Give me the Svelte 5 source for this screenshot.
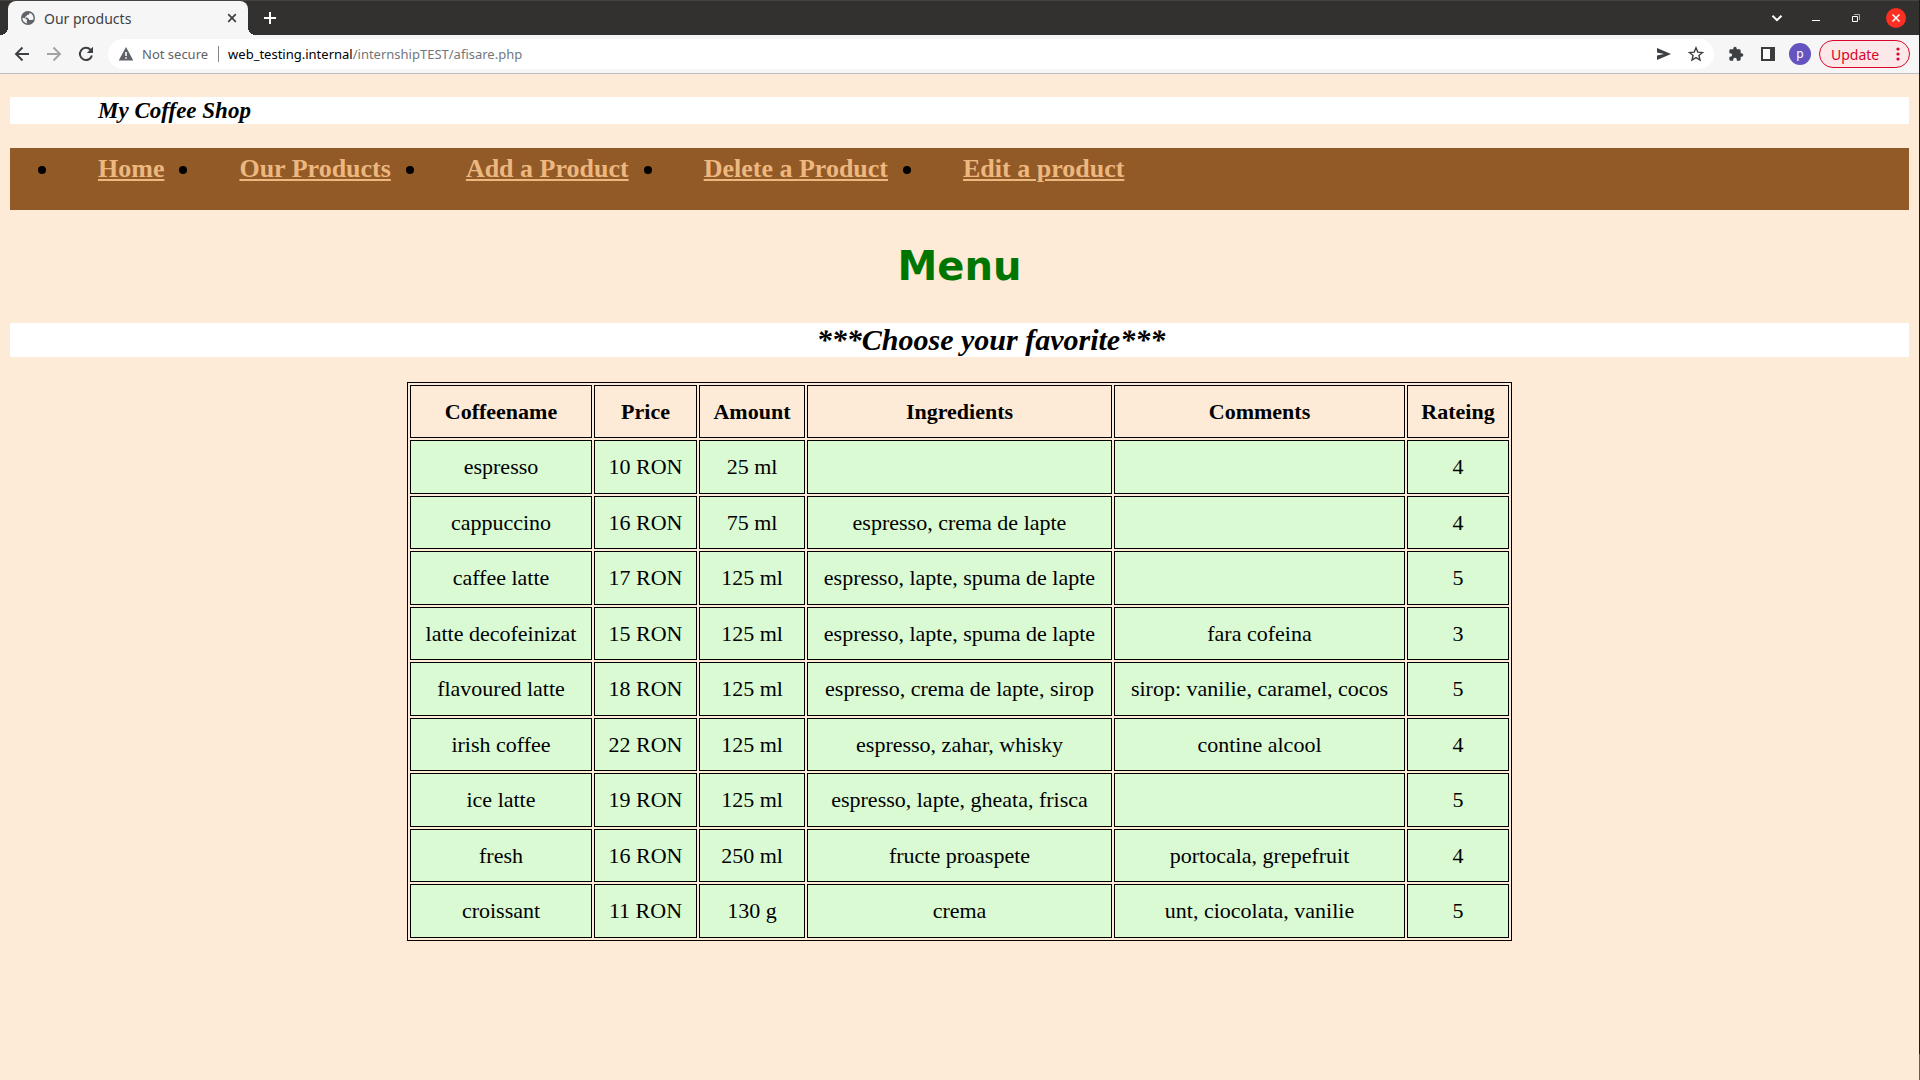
<script>
  const links = ['Home', 'Our Products', 'Add a Product', 'Delete a Product', 'Edit a product'];
  const columns = [
    { title: 'Coffeename', cls: 'name' },
    { title: 'Price', cls: 'price' },
    { title: 'Amount', cls: 'amount' },
    { title: 'Ingredients', cls: 'ingredients' },
    { title: 'Comments', cls: 'comments' },
    { title: 'Rateing', cls: 'rating' }
  ];
  const products = [
    ['espresso', '10 RON', '25 ml', '', '', '4'],
    ['cappuccino', '16 RON', '75 ml', 'espresso, crema de lapte', '', '4'],
    ['caffee latte', '17 RON', '125 ml', 'espresso, lapte, spuma de lapte', '', '5'],
    ['latte decofeinizat', '15 RON', '125 ml', 'espresso, lapte, spuma de lapte', 'fara cofeina', '3'],
    ['flavoured latte', '18 RON', '125 ml', 'espresso, crema de lapte, sirop', 'sirop: vanilie, caramel, cocos', '5'],
    ['irish coffee', '22 RON', '125 ml', 'espresso, zahar, whisky', 'contine alcool', '4'],
    ['ice latte', '19 RON', '125 ml', 'espresso, lapte, gheata, frisca', '', '5'],
    ['fresh', '16 RON', '250 ml', 'fructe proaspete', 'portocala, grepefruit', '4'],
    ['croissant', '11 RON', '130 g', 'crema', 'unt, ciocolata, vanilie', '5']
  ];
</script>

<div class="window">
  <header class="browser">
    <div class="tabstrip">
      <div class="tab">
        <svg class="globe" viewBox="0 0 16 16" width="16" height="16" aria-hidden="true">
          <circle cx="8" cy="8" r="7" fill="#5f6368" />
          <path d="M9.500 2.700C9.800 4 9 4.700 7.800 4.800c-1 .1-.8 1.500-1.800 1.600-.8.1-1.200.5-.9 1.100.5.800 2.600.2 3.400 1 .6.600.3 1.500 1.300 1.600 1.200.1 2.200-.6 3.500-.4A5.600 5.600 0 0 0 9.500 2.700z" fill="#f6f6f6" />
          <path d="M2.400 7.700c1.600.2 3.400.6 4.300 1.700.8 1-.2 1.600 0 2.500.1.700.7 1 .6 1.700A5.600 5.600 0 0 1 2.400 7.700z" fill="#f6f6f6" />
        </svg>
        <span class="tab-title">Our products</span>
        <button class="plain close-tab" aria-label="Close tab">
          <svg viewBox="0 0 16 16" width="16" height="16"><path d="M4.200 4.200l7.600 7.600M11.800 4.200l-7.600 7.600" stroke="#3c4043" stroke-width="1.700" /></svg>
        </button>
      </div>
      <button class="plain new-tab" aria-label="New tab">
        <svg viewBox="0 0 16 16" width="16" height="16"><path d="M8 2v12M2 8h12" stroke="#fff" stroke-width="2" /></svg>
      </button>
      <div class="controls">
        <button class="plain" aria-label="Search tabs">
          <svg viewBox="0 0 20 20" width="20" height="20"><path d="M6.500 7.700l4.500 4.500 4.500-4.500" fill="none" stroke="#fff" stroke-width="2" /></svg>
        </button>
        <button class="plain" aria-label="Minimize">
          <svg viewBox="0 0 20 20" width="20" height="20"><path d="M6 12.500h8" stroke="#fff" /></svg>
        </button>
        <button class="plain" aria-label="Restore">
          <svg viewBox="0 0 20 20" width="20" height="20" fill="none"><path d="M8 6.500h5.500V12" stroke="#aaa" /><path d="M6.500 8.500h5v5h-5z" stroke="#fff" /></svg>
        </button>
        <button class="plain" aria-label="Close window">
          <svg viewBox="0 0 20 20" width="20" height="20"><circle cx="10" cy="10" r="10" fill="#fc2f22" /><path d="M6.500 6.500l7 7M13.500 6.500l-7 7" stroke="#fff" stroke-width="1.600" /></svg>
        </button>
      </div>
    </div>

    <div class="toolbar">
      <div class="history">
        <button class="plain" aria-label="Back">
          <svg viewBox="0 0 16 16" width="16" height="16"><path d="M15 8H2.500M8.500 1.500 2 8l6.500 6.500" fill="none" stroke="#3c4043" stroke-width="1.900" /></svg>
        </button>
        <button class="plain" aria-label="Forward">
          <svg viewBox="0 0 16 16" width="16" height="16"><path d="M1 8h12.500M7.500 1.500 14 8l-6.500 6.500" fill="none" stroke="#a3a3a3" stroke-width="1.900" /></svg>
        </button>
        <button class="plain" aria-label="Reload">
          <svg viewBox="0 0 16 16" width="16" height="16"><path d="M13.900 9.500A6.100 6.100 0 1 1 12.500 3.800" fill="none" stroke="#3c4043" stroke-width="2" /><path d="M15 .8v6.200H8.800z" fill="#3c4043" /></svg>
        </button>
      </div>
      <div class="omnibox">
        <svg viewBox="0 0 16 16" width="16" height="16" aria-hidden="true"><path d="M8 1 .7 14.500h14.600z" fill="#5f6368" /><path d="M8 6v4M8 11.200v1.600" stroke="#fff" stroke-width="1.600" /></svg>
        <span class="security">Not secure</span>
        <span class="url"><span class="host">web_testing.internal</span>/internshipTEST/afisare.php</span>
        <button class="plain share" aria-label="Share this page">
          <svg viewBox="0 0 16 16" width="16" height="16"><path d="M1 2l14 6-14 6V9.500L8 8 1 6.500z" fill="#3c4043" /></svg>
        </button>
        <button class="plain" aria-label="Bookmark this page">
          <svg viewBox="0 0 16 16" width="16" height="16"><path d="M8 1.800l1.800 4.300 4.700.4-3.600 3 1.100 4.600-4-2.500-4 2.500 1.100-4.600-3.600-3 4.700-.4z" fill="none" stroke="#3c4043" stroke-width="1.400" /></svg>
        </button>
      </div>
      <div class="actions">
        <button class="plain" aria-label="Extensions">
          <svg viewBox="0 0 24 24" width="16" height="16"><path d="M20.500 11H19V7c0-1.100-.9-2-2-2h-4V3.500a2.500 2.500 0 0 0-5 0V5H4c-1.100 0-2 .9-2 2v3.800h1.500a2.700 2.700 0 0 1 0 5.400H2V20c0 1.100.9 2 2 2h3.800v-1.500a2.700 2.700 0 0 1 5.400 0V22H17c1.100 0 2-.9 2-2v-4h1.500a2.500 2.500 0 0 0 0-5z" fill="#3c4043" /></svg>
        </button>
        <button class="plain panel" aria-label="Side panel">
          <svg viewBox="0 0 14 14" width="14" height="14"><path d="M0 0h14v14H0zM2 2v10h7V2z" fill="#3c3c3c" fill-rule="evenodd" /><path d="M2 2h7v10H2z" fill="#fff" /></svg>
        </button>
        <button class="plain avatar" aria-label="Profile">p</button>
        <button class="update">Update
          <svg viewBox="0 0 4 16" width="4" height="16" fill="#d9042b"><circle cx="2" cy="3" r="1.600" /><circle cx="2" cy="8" r="1.600" /><circle cx="2" cy="13" r="1.600" /></svg>
        </button>
      </div>
    </div>
  </header>

  <main>
    <h3>My Coffee Shop</h3>
    <nav>
      <ul>
        {#each links as link}
          <li><a href="#top">{link}</a></li>
        {/each}
      </ul>
    </nav>
    <h1>Menu</h1>
    <h2>***Choose your favorite***</h2>
    <table>
      <colgroup>
        {#each columns as column}<col class={column.cls} />{/each}
      </colgroup>
      <thead>
        <tr>
          {#each columns as column}<th scope="col">{column.title}</th>{/each}
        </tr>
      </thead>
      <tbody>
        {#each products as product}
          <tr>
            {#each product as value}<td>{value}</td>{/each}
          </tr>
        {/each}
      </tbody>
    </table>
  </main>
</div>

<style>
  :global(body) {
    margin: 0;
    background: #fdebd7;
  }
  .window {
    box-sizing: border-box;
    min-height: 100vh;
    padding-right: 1px;
    background: linear-gradient(#1d1b19 0, #1d1b19 calc(100% - 26px), #1a6fbf calc(100% - 26px)) right / 1px 100% no-repeat;
    font-family: 'Liberation Serif', serif;
    color: #000;
  }
  .browser {
    font-family: 'Noto Sans', sans-serif;
    font-size: 13px;
    border-bottom: 1px solid #bfbcc4;
  }
  .plain {
    display: flex;
    align-items: center;
    justify-content: center;
    padding: 0;
    border: 0;
    background: none;
    font: inherit;
  }
  .tabstrip {
    display: flex;
    align-items: center;
    height: 34px;
    padding-left: 8px;
    border-top: 1px solid #454442;
    background: #32312f;
  }
  .tab {
    position: relative;
    box-sizing: border-box;
    display: flex;
    align-items: center;
    gap: 8px;
    width: 240px;
    height: 34px;
    padding: 0 8px 0 12px;
    border-radius: 8px 8px 0 0;
    background: #f6f6f6;
    color: #3c4043;
  }
  .tab::before,
  .tab::after {
    content: '';
    position: absolute;
    bottom: 0;
    width: 8px;
    height: 8px;
  }
  .tab::before {
    right: 100%;
    background: radial-gradient(circle at 0 0, #32312f 8px, #f6f6f6 8px);
  }
  .tab::after {
    left: 100%;
    background: radial-gradient(circle at 100% 0, #32312f 8px, #f6f6f6 8px);
  }
  .tab-title {
    flex: 1;
    font-size: 14px;
  }
  .new-tab {
    margin-left: 14px;
  }
  .controls {
    display: flex;
    gap: 20px;
    margin-left: auto;
    padding-right: 13px;
  }
  .toolbar {
    display: flex;
    align-items: center;
    height: 38px;
    padding: 0 9px 0 14px;
    background: #f6f6f6;
  }
  .history {
    display: flex;
    gap: 16px;
    margin-right: 14px;
  }
  .omnibox {
    flex: 1;
    display: flex;
    align-items: center;
    height: 30px;
    padding: 0 10px;
    border-radius: 15px;
    background: #fff;
  }
  .security {
    margin-left: 8px;
    padding-right: 10px;
    border-right: 1px solid #80868b;
    line-height: 16px;
    color: #5f6368;
  }
  .url {
    flex: 1;
    margin-left: 9px;
    color: #72777c;
  }
  .host {
    color: #000;
  }
  .share {
    margin-right: 16px;
  }
  .actions {
    display: flex;
    align-items: center;
    margin-left: 14px;
  }
  .panel {
    margin: 0 14px 0 17px;
  }
  .avatar {
    width: 22px;
    height: 22px;
    margin-right: 8px;
    border-radius: 50%;
    background: #6554c0;
    color: #fff;
    font-size: 12px;
    line-height: 20px;
  }
  .update {
    display: flex;
    align-items: center;
    justify-content: space-between;
    width: 91px;
    height: 28px;
    padding: 0 9px 0 11px;
    border: 1px solid #d9042b;
    border-radius: 14px;
    background: #fce8e8;
    color: #d9042b;
    font: inherit;
    font-size: 14px;
  }
  main {
    padding: 23px 10px 0;
  }
  h1,
  h2,
  h3 {
    margin: 0;
  }
  h3 {
    padding-left: 88px;
    background: #fff;
    font-size: 23px;
    font-style: italic;
    line-height: 27px;
  }
  nav {
    margin-top: 24px;
    background: #925a27;
  }
  ul {
    display: flex;
    gap: 37px;
    margin: 0;
    padding: 6px 0 26px 50px;
    font-size: 26px;
    font-weight: bold;
    line-height: 30px;
  }
  li a {
    margin-left: 38px;
    color: #edb780;
  }
  h1 {
    margin-top: 32px;
    color: #007600;
    font-family: 'DejaVu Sans', sans-serif;
    font-size: 40px;
    line-height: 48px;
    text-align: center;
  }
  h2 {
    margin-top: 33px;
    padding-left: 63px;
    background: #fff;
    font-size: 30px;
    font-style: italic;
    line-height: 34px;
    text-align: center;
  }
  table {
    margin: 25px auto 0;
    border: 1px solid #000;
    border-spacing: 2px;
    font-size: 22px;
    line-height: 26px;
    text-align: center;
  }
  .name {
    width: 182px;
  }
  .price {
    width: 103px;
  }
  .amount {
    width: 106px;
  }
  .ingredients {
    width: 305px;
  }
  .comments {
    width: 291px;
  }
  .rating {
    width: 102px;
  }
  th,
  td {
    box-sizing: border-box;
    height: 53px;
    padding: 0 10px;
    border: 1px solid #000;
  }
  td {
    background: #dafad4;
  }
  tbody tr:nth-child(odd) td {
    height: 54px;
  }
</style>
